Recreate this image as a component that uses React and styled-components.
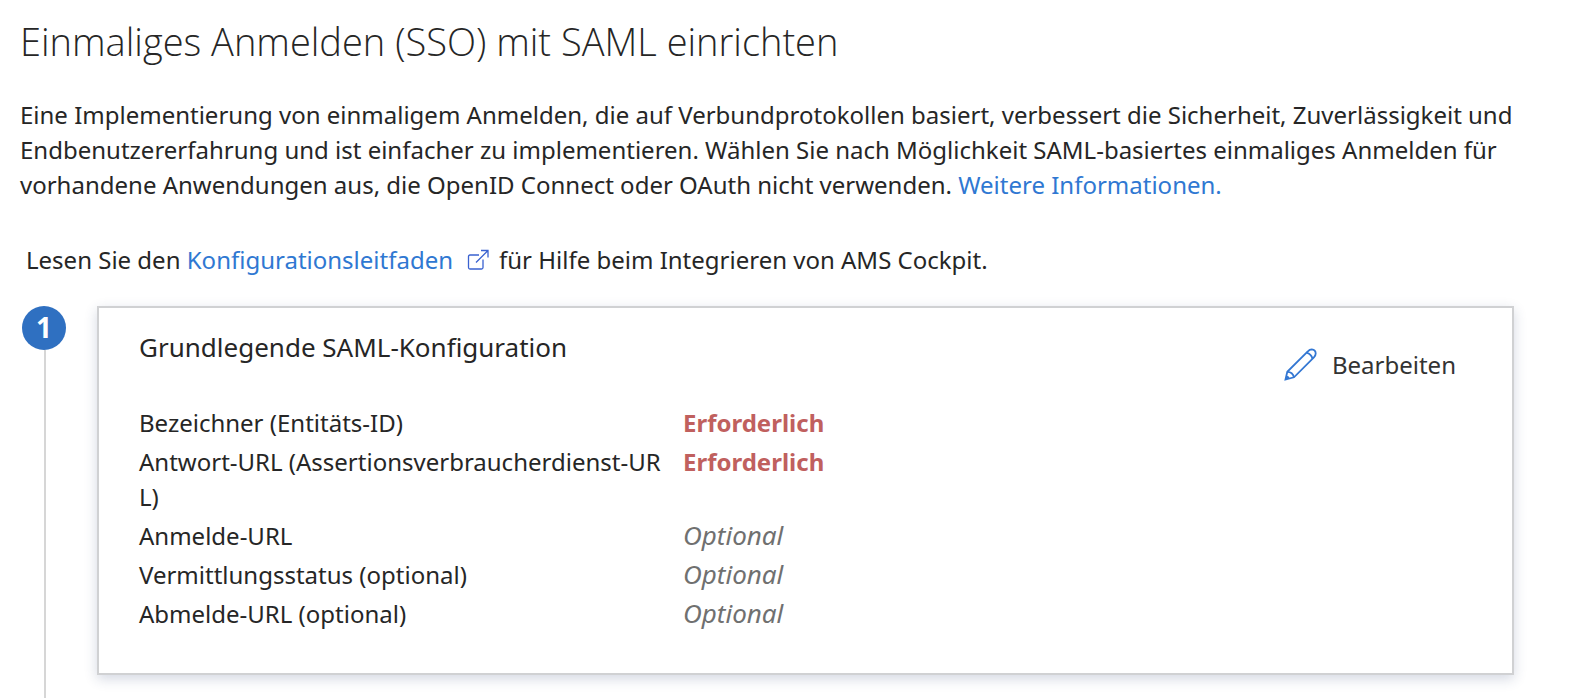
import React from "react";
import styled, { createGlobalStyle } from "styled-components";

const GlobalStyle = createGlobalStyle`
  * {
    box-sizing: border-box;
  }
  body {
    margin: 0;
    background: #ffffff;
    color: #262626;
    font-family: "Noto Sans", "Open Sans", sans-serif;
    font-size: 24px;
    line-height: 35px;
  }
`;

const Page = styled.main`
  display: flex;
  flex-direction: column;
  min-height: 100vh;
  padding: 15px 20px 0;
`;

const Title = styled.h1`
  margin: 0;
  font-family: "Open Sans", "Noto Sans", sans-serif;
  font-size: 38px;
  line-height: 52px;
  font-weight: 300;
`;

const Intro = styled.p`
  margin: 30px 0 0;
`;

const Guide = styled.p`
  margin: 40px 0 0;
  padding-left: 6px;
`;

const Link = styled.a`
  color: #2f78d2;
  text-decoration: none;
  &:hover {
    text-decoration: underline;
  }
  svg {
    width: 22px;
    height: 22px;
    margin: 0 10px 0 14px;
    vertical-align: -2px;
  }
`;

const Step = styled.section`
  flex: 1;
  display: flex;
  gap: 30px;
  margin-top: 29px;
  padding-right: 54px;
`;

const Rail = styled.div`
  display: flex;
  flex-direction: column;
  padding-left: 2px;
  &::after {
    content: "";
    flex: 1;
    width: 2px;
    margin-left: 22px;
    background: #d6d6d6;
  }
`;

const StepNumber = styled.span`
  width: 44px;
  height: 44px;
  margin-right: 1px;
  border-radius: 50%;
  background: #2f70c1;
  color: #ffffff;
  font-size: 28px;
  font-weight: 700;
  line-height: 42px;
  text-align: center;
`;

const Card = styled.div`
  flex: 1;
  align-self: flex-start;
  min-width: 0;
  margin-bottom: 22px;
  padding: 22px 56px 40px 40px;
  border: 2px solid #d0d1d3;
  background: #ffffff;
  box-shadow: 0 4px 12px rgba(40, 60, 110, 0.2);
`;

const CardHeader = styled.div`
  display: flex;
  justify-content: space-between;
  align-items: flex-start;
`;

const CardTitle = styled.h2`
  margin: 0;
  font-size: 26px;
  font-weight: 400;
  line-height: 35px;
`;

const EditButton = styled.button`
  display: flex;
  align-items: center;
  gap: 15px;
  margin-top: 17px;
  padding: 0;
  border: 0;
  background: none;
  color: #333333;
  font: inherit;
  cursor: pointer;
  svg {
    width: 33px;
    height: 33px;
  }
`;

const Settings = styled.table`
  width: 100%;
  margin-top: 21px;
  border-collapse: collapse;
  table-layout: fixed;
`;

const Label = styled.th`
  width: 544px;
  padding: 2px 8px 2px 0;
  font-weight: 400;
  text-align: left;
  vertical-align: top;
  word-break: break-all;
`;

const Value = styled.td`
  padding: 2px 0;
  vertical-align: top;
  color: ${(props) => (props.$required ? "#c0605e" : "#707070")};
  font-size: ${(props) => (props.$required ? "24px" : "26px")};
  font-weight: ${(props) => (props.$required ? 700 : 400)};
  font-style: ${(props) => (props.$required ? "normal" : "italic")};
`;

const settings = [
  { label: "Bezeichner (Entitäts-ID)", required: true },
  { label: "Antwort-URL (Assertionsverbraucherdienst-URL)", required: true },
  { label: "Anmelde-URL", required: false },
  { label: "Vermittlungsstatus (optional)", required: false },
  { label: "Abmelde-URL (optional)", required: false },
];

const ExternalIcon = () => (
  <svg viewBox="0 0 22 22" fill="none" stroke="#3a62d0" strokeWidth="1.3" aria-hidden="true">
    <path d="M12 6H3Q1.5 6 1.5 7.5V18.500Q1.5 20 3 20H14.500Q16 20 16 18.500V10.500" />
    <path d="M9 13.500L21 1.500M14 1.500H21V8.500" />
  </svg>
);

const PencilIcon = () => (
  <svg viewBox="0 0 33 33" fill="none" stroke="#3377d3" strokeWidth="1.8" aria-hidden="true">
    <path d="M1.500 31.500L3.300 23.800L23.800 3.300Q25.700 1.300 27.700 1.300Q31.700 1.800 31.700 5.500Q31.700 7.500 29.900 9.300L10 29.300Z" />
    <path d="M22.500 4.700Q27.300 6 28.500 10.700M3.300 23.800Q8.700 23.800 10 29.300" />
    <path d="M1.500 31.500L2.500 27.500Q5.300 27.800 5.800 30.500Z" fill="#3377d3" stroke="none" />
  </svg>
);

const App = () => {
  return (
    <>
      <GlobalStyle />
      <Page>
        <Title>Einmaliges Anmelden (SSO) mit SAML einrichten</Title>
        <Intro>
          Eine Implementierung von einmaligem Anmelden, die auf Verbundprotokollen basiert, verbessert die
          Sicherheit, Zuverlässigkeit und Endbenutzererfahrung und ist einfacher zu implementieren. Wählen Sie
          nach Möglichkeit SAML-basiertes einmaliges Anmelden für vorhandene Anwendungen aus, die OpenID Connect
          oder OAuth nicht verwenden. <Link href="#info">Weitere Informationen.</Link>
        </Intro>
        <Guide>
          Lesen Sie den{" "}
          <Link href="#guide">
            Konfigurationsleitfaden
            <ExternalIcon />
          </Link>
          für Hilfe beim Integrieren von AMS Cockpit.
        </Guide>
        <Step>
          <Rail>
            <StepNumber>1</StepNumber>
          </Rail>
          <Card>
            <CardHeader>
              <CardTitle>Grundlegende SAML-Konfiguration</CardTitle>
              <EditButton type="button">
                <PencilIcon />
                Bearbeiten
              </EditButton>
            </CardHeader>
            <Settings>
              <tbody>
                {settings.map((item) => (
                  <tr key={item.label}>
                    <Label scope="row">{item.label}</Label>
                    <Value $required={item.required}>{item.required ? "Erforderlich" : "Optional"}</Value>
                  </tr>
                ))}
              </tbody>
            </Settings>
          </Card>
        </Step>
      </Page>
    </>
  );
};

export default App;
